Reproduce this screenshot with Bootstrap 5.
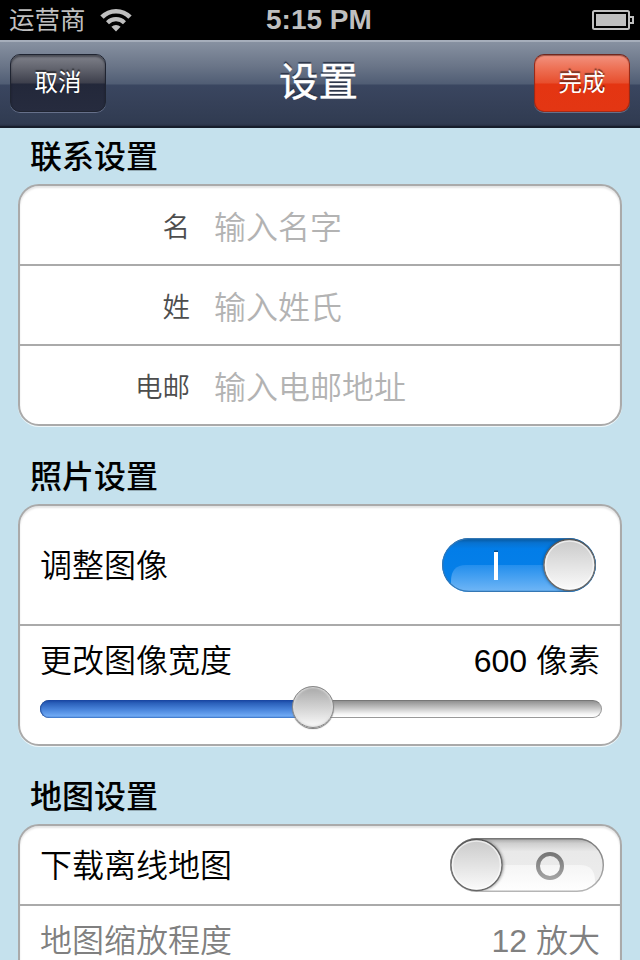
<!DOCTYPE html>
<html lang="zh-CN">
<head>
<meta charset="utf-8">
<meta name="viewport" content="width=device-width, initial-scale=1">
<title>设置</title>
<link href="https://cdn.jsdelivr.net/npm/bootstrap@5.3.0/dist/css/bootstrap.min.css" rel="stylesheet">
<style>
body{width:640px;height:960px;overflow:hidden;background:#c5e1ed;color:#000;font-family:"Liberation Sans","Noto Sans CJK SC",sans-serif;font-size:32px;line-height:40px}
main{height:832px}
.status{height:40px;background:#000;color:#bfbfbf;padding:0 6px 0 9px}
.carrier{font-size:25.5px;font-weight:400}
.wifi{margin-left:14px}
.clock{font-size:28px;font-weight:700;left:266px;top:0}
.titlebar{height:88px;padding:0 10px;border-top:2px solid #a6aebb;border-bottom:2px solid #171e2c;background:linear-gradient(#8791a1 0,#6a7588 24px,#505d74 42px,#3a4660 43px,#364159 60px,#303b51 82px,#252e41 84px);color:#fff}
.titlebar h1{font-size:39.5px;font-weight:400;line-height:56px;text-shadow:0 -2px 1px #2a3346;margin:-4px 3px 0 0;-webkit-text-stroke:.4px #fff}
.btn-bar{width:96px;height:58px;border:1px solid #171a24;border-radius:10px;color:#fff!important;font-size:23.5px;line-height:56px;padding:0;text-shadow:0 -2px 1px rgba(0,0,0,.5);margin-top:-2px}
.btn-dark-bar,.btn-dark-bar:hover{background:linear-gradient(#80828b 0,#656771 12px,#3d3f4c 28px,#23283a 29px,#262b3e);border-color:#1f2431;box-shadow:inset 0 2px 2px rgba(20,22,30,.5),0 1px 0 #66708a}
.btn-red-bar,.btn-red-bar:hover{background:linear-gradient(#f29380 0,#ee7459 12px,#e74e2d 28px,#e43512 29px,#e33613);border-color:#6e2820 #982a18 #a82a14;box-shadow:inset 0 1px 1px rgba(80,20,10,.5),0 1px 0 #66708a}
.section-title{font-size:32px;font-weight:500;line-height:56px;height:56px;padding:1px 0 0 30px;margin:0}
.panel{margin:0 18px 22px;border:2px solid #aaa;border-radius:21px;background:#fff;box-shadow:0 1px 0 #eef7fa,inset 0 2px 2px #e4e4e4}
.panel>div+div{border-top:2px solid #aaa}
.field{height:80px;padding-top:5px}
.panel>.field:first-child{height:78px}
.field label{width:170px;font-size:27.5px;color:#4d4d4d;font-weight:350}
.field input{background:none;border:0;outline:0;padding:0;margin-left:24px;width:380px;font-size:32px;font-weight:350}
.field input::placeholder{color:#b3b3b3;opacity:1}
.setting{height:118px;padding:0 24px 0 20px;font-weight:350}
.setting span{padding-top:2px}
.setting.short{height:78px;padding-right:16px}
.slide-row{height:120px;padding:15px 18px 0 20px;font-weight:350}
.num{margin-right:2px}
.toggle{width:154px;height:54px}
.rail{height:18px;border-radius:9px;border:1px solid #999;border-top-color:#777;background:linear-gradient(#909090,#c5c5c5 7px,#f5f5f5 13px,#fff);margin-top:19px}
.fill{height:18px;margin:-1px 0 0 -1px;border-radius:9px 0 0 9px;background:linear-gradient(#1742a0 0,#2a5fb9 3px,#4c87dd 10px,#70aaf4 16px,#3e77c9 18px);box-shadow:inset 1px 0 1px #2450a0}
.knob{width:42px;height:42px;top:-15px;left:251px;border-radius:50%;border:1px solid #888;background:linear-gradient(#a9a9a9,#fafafa);box-shadow:0 1px 1px #777,inset 0 0 2px 1px #ddd}
.muted{color:#808080}
</style>
<script src="https://cdn.jsdelivr.net/npm/bootstrap@5.3.0/dist/js/bootstrap.bundle.min.js"></script>
</head>
<body>
<header>
  <div class="status d-flex align-items-center position-relative">
    <span class="carrier">运营商</span>
    <svg class="wifi" width="32" height="24" viewBox="0 0 32 24" fill="none" stroke="#bfbfbf" aria-hidden="true">
      <path d="M2 9.2A19.3 19.3 0 0 1 30 9.2" stroke-width="4.6"/>
      <path d="M7.5 14.7A12 12 0 0 1 24.500 14.700" stroke-width="4.200"/>
      <path d="M16 23.500L11.400 18.800A6.500 6.500 0 0 1 20.600 18.800Z" fill="#bfbfbf" stroke="none"/>
    </svg>
    <span class="clock position-absolute">5:15 PM</span>
    <svg class="ms-auto" width="42" height="20" viewBox="0 0 42 20" fill="none" stroke="#bfbfbf" stroke-width="2" aria-hidden="true">
      <rect x="1" y="1" width="36" height="18" rx="1.500"/>
      <rect x="4" y="4" width="30" height="12" fill="#bfbfbf" stroke="none"/>
      <path d="M38 7H41V13H38"/>
    </svg>
  </div>
  <nav class="titlebar d-flex align-items-center justify-content-between">
    <button class="btn btn-bar btn-dark-bar">取消</button>
    <h1>设置</h1>
    <button class="btn btn-bar btn-red-bar">完成</button>
  </nav>
</header>
<main class="overflow-hidden">
  <h2 class="section-title">联系设置</h2>
  <section class="panel">
    <div class="field d-flex align-items-center"><label class="text-end" for="given">名</label><input id="given" placeholder="输入名字"></div>
    <div class="field d-flex align-items-center"><label class="text-end" for="family">姓</label><input id="family" placeholder="输入姓氏"></div>
    <div class="field d-flex align-items-center"><label class="text-end" for="mail">电邮</label><input id="mail" placeholder="输入电邮地址"></div>
  </section>
  <h2 class="section-title">照片设置</h2>
  <section class="panel">
    <div class="setting d-flex align-items-center justify-content-between">
      <span>调整图像</span>
      <svg class="toggle" viewBox="0 0 154 54" role="img" aria-label="开">
        <defs>
          <linearGradient id="knobFill" x2="0" y2="1"><stop stop-color="#cacaca"/><stop offset="1" stop-color="#fbfbfb"/></linearGradient>
          <linearGradient id="blueFill" x2="0" y2="1"><stop stop-color="#075394"/><stop offset=".09" stop-color="#0872d0"/><stop offset=".2" stop-color="#027de8"/><stop offset="1" stop-color="#0881e8"/></linearGradient>
          <linearGradient id="blueGloss" x2="0" y2="1"><stop stop-color="#238eed"/><stop offset="1" stop-color="#71b7f6"/></linearGradient>
          <linearGradient id="edge" x2="0" y2="1"><stop stop-color="#555"/><stop offset=".5" stop-color="#777"/><stop offset="1" stop-color="#666"/></linearGradient>
          <clipPath id="pill"><rect width="154" height="54" rx="27"/></clipPath>
          <filter id="soft" x="-20%" y="-20%" width="140%" height="140%"><feGaussianBlur stdDeviation="1.500"/></filter>
        </defs>
        <g clip-path="url(#pill)">
          <rect width="154" height="54" fill="url(#blueFill)"/>
          <path d="M9 54V43Q9 27 24 27H130V54Z" fill="url(#blueGloss)"/>
          <rect x=".5" y=".5" width="153" height="53" rx="26.500" fill="none" stroke="#3477b4" stroke-width="1.500"/>
          <circle cx="127" cy="27" r="26" fill="#103d70" opacity=".7" filter="url(#soft)"/>
        </g>
        <circle cx="127.500" cy="27" r="25.500" fill="url(#knobFill)" stroke="url(#edge)" stroke-width="1.500"/>
        <circle cx="127.500" cy="27" r="24" fill="none" stroke="#fff" stroke-width="1.500" opacity=".6"/>
        <path d="M52 13.500h4" stroke="#064d89" stroke-width="2"/>
        <rect x="52" y="14" width="4" height="28" fill="#fff"/>
      </svg>
    </div>
    <div class="slide-row">
      <div class="d-flex justify-content-between"><span>更改图像宽度</span><span class="num">600 像素</span></div>
      <div class="rail position-relative"><div class="fill" style="width:48.5%"></div><div class="knob position-absolute"></div></div>
    </div>
  </section>
  <h2 class="section-title">地图设置</h2>
  <section class="panel">
    <div class="setting short d-flex align-items-center justify-content-between">
      <span>下载离线地图</span>
      <svg class="toggle" viewBox="0 0 154 54" role="img" aria-label="关">
        <defs>
          <linearGradient id="greyFill" x2="0" y2="1"><stop stop-color="#a0a0a0"/><stop offset=".1" stop-color="#cfcfcf"/><stop offset=".25" stop-color="#e9e9e9"/><stop offset="1" stop-color="#eee"/></linearGradient>
          <linearGradient id="greyGloss" x2="0" y2="1"><stop stop-color="#f5f5f5"/><stop offset="1" stop-color="#fff"/></linearGradient>
          <linearGradient id="greyEdge" x2="0" y2="1"><stop stop-color="#777"/><stop offset="1" stop-color="#b5b5b5"/></linearGradient>
          <linearGradient id="ring" x2="0" y2="1"><stop stop-color="#777"/><stop offset="1" stop-color="#a2a2a2"/></linearGradient>
        </defs>
        <g clip-path="url(#pill)">
          <rect width="154" height="54" fill="url(#greyFill)"/>
          <path d="M26 27H130Q145 27 145 43V54H26Z" fill="url(#greyGloss)"/>
          <circle cx="27.500" cy="27" r="26" fill="#666" opacity=".7" filter="url(#soft)"/>
        </g>
        <rect x=".7" y=".7" width="152.600" height="52.600" rx="26.300" fill="none" stroke="url(#greyEdge)" stroke-width="1.400"/>
        <circle cx="26.500" cy="27" r="25.500" fill="url(#knobFill)" stroke="url(#edge)" stroke-width="1.500"/>
        <circle cx="26.500" cy="27" r="24" fill="none" stroke="#fff" stroke-width="1.500" opacity=".6"/>
        <circle cx="100" cy="28" r="12" fill="none" stroke="url(#ring)" stroke-width="4"/>
      </svg>
    </div>
    <div class="slide-row muted">
      <div class="d-flex justify-content-between"><span>地图缩放程度</span><span class="num">12 放大</span></div>
    </div>
  </section>
</main>
</body>
</html>
